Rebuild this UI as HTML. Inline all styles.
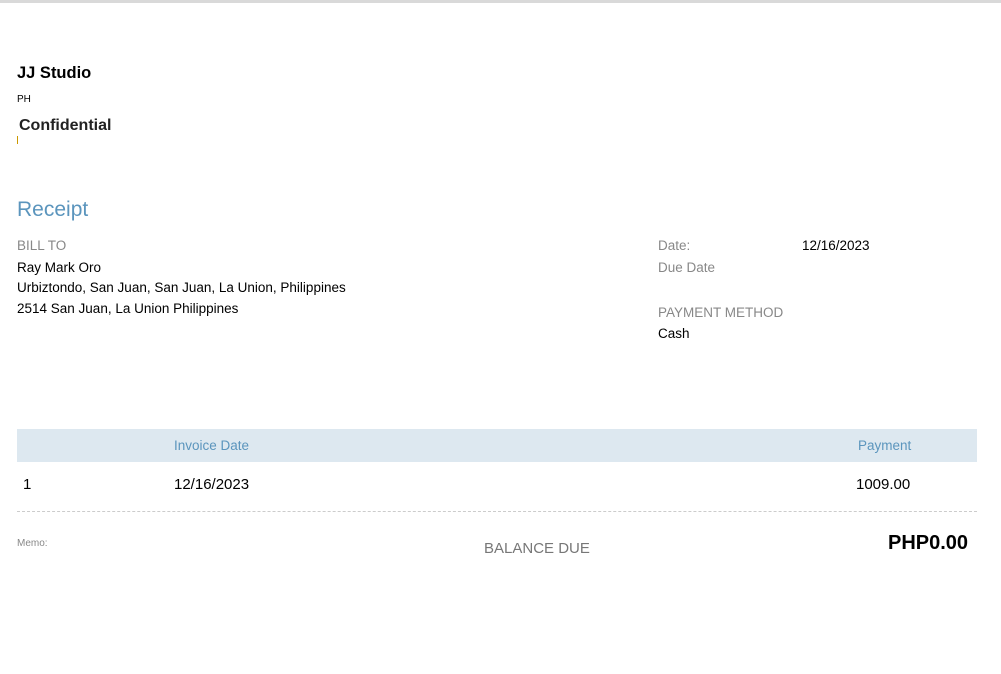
<!DOCTYPE html>
<html><head><style>
body{margin:0;width:1001px;height:674px;background:#fff;font-family:"Liberation Sans",sans-serif;position:relative;overflow:hidden}
div{position:absolute;white-space:nowrap}
.g{color:#888;font-size:13.5px}
.t{color:#000;font-size:13.5px}
</style></head><body>
<div style="left:0;top:0;width:1001px;height:3px;background:#d9d9d9"></div>
<div style="left:17px;top:64px;font-size:16.5px;font-weight:bold">JJ Studio</div>
<div style="left:17px;top:94px;font-size:10px">PH</div>
<div style="left:19px;top:117px;font-size:16px;font-weight:bold;color:#222">Confidential</div>
<div style="left:17px;top:136px;width:1px;height:8px;background:#c90"></div>
<div style="left:17px;top:198px;font-size:21px;color:#5b95bd">Receipt</div>
<div class="g" style="left:17px;top:238px">BILL TO</div>
<div class="t" style="left:17px;top:260px">Ray Mark Oro</div>
<div class="t" style="left:17px;top:280px">Urbiztondo, San Juan, San Juan, La Union, Philippines</div>
<div class="t" style="left:17px;top:301px">2514 San Juan, La Union Philippines</div>
<div class="g" style="left:658px;top:238px">Date:</div>
<div class="t" style="left:802px;top:238px">12/16/2023</div>
<div class="g" style="left:658px;top:260px">Due Date</div>
<div class="g" style="left:658px;top:305px">PAYMENT METHOD</div>
<div class="t" style="left:658px;top:326px">Cash</div>
<div style="left:17px;top:429px;width:960px;height:33px;background:#dde8f0"></div>
<div style="left:174px;top:438px;font-size:13.5px;color:#5b95bd">Invoice Date</div>
<div style="left:858px;top:438px;font-size:13.5px;color:#5b95bd">Payment</div>
<div style="left:23px;top:476px;font-size:15px">1</div>
<div style="left:174px;top:476px;font-size:15px">12/16/2023</div>
<div style="left:856px;top:476px;font-size:15px">1009.00</div>
<div style="left:17px;top:511px;width:960px;border-top:1px dashed #ccc"></div>
<div style="left:17px;top:538px;font-size:10px;color:#888">Memo:</div>
<div style="left:484px;top:540px;font-size:15px;color:#777">BALANCE DUE</div>
<div style="left:888px;top:532px;font-size:20px;font-weight:bold">PHP0.00</div>
</body></html>
